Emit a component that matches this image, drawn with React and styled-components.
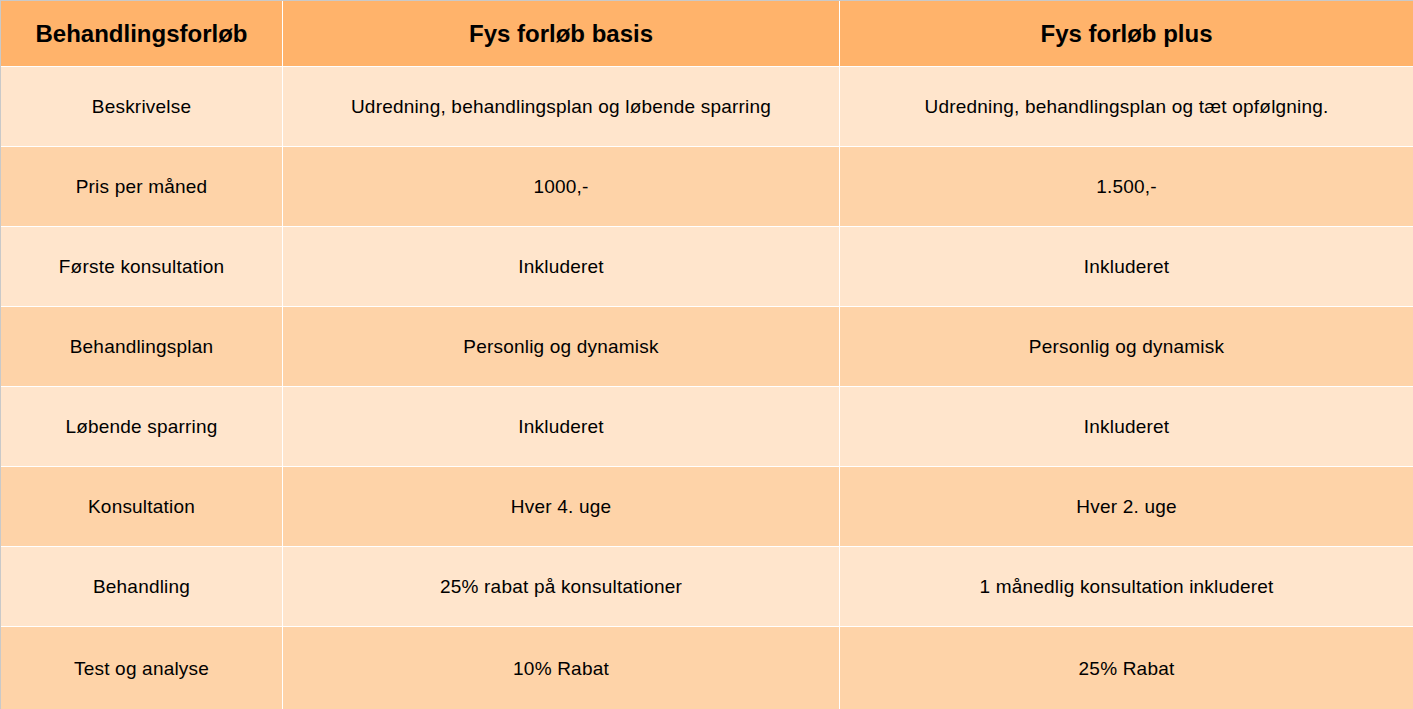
import React from 'react';
import styled, { createGlobalStyle } from 'styled-components';

const GlobalStyle = createGlobalStyle`
    body {
        margin: 0;
        padding: 0;
        background-color: #fff;
        font-family: "Liberation Sans", Arial, sans-serif;
        color: #000;
    }
`;

const Table = styled.div`
    display: grid;
    grid-template-columns: 281px 556px 1fr;
    grid-template-rows: 65px repeat(7, 79px) 1fr;
    gap: 1px;
    min-height: 100vh;
    box-sizing: border-box;
    background-color: #fff;
    border-top: 1px solid #c9c9c9;
    border-left: 1px solid #c9c9c9;
`;

const HeadCell = styled.div`
    display: flex;
    align-items: center;
    justify-content: center;
    background-color: #ffb36b;
    font-size: 24px;
    font-weight: bold;
    padding-top: 1px;
`;

const Cell = styled.div`
    display: flex;
    align-items: center;
    justify-content: center;
    background-color: ${(p) => (p.$dark ? '#fed3a8' : '#ffe5cc')};
    font-size: 19px;
    letter-spacing: 0.2px;
    padding-top: 1px;
`;

const rows = [
    ['Beskrivelse', 'Udredning, behandlingsplan og løbende sparring', 'Udredning, behandlingsplan og tæt opfølgning.'],
    ['Pris per måned', '1000,-', '1.500,-'],
    ['Første konsultation', 'Inkluderet', 'Inkluderet'],
    ['Behandlingsplan', 'Personlig og dynamisk', 'Personlig og dynamisk'],
    ['Løbende sparring', 'Inkluderet', 'Inkluderet'],
    ['Konsultation', 'Hver 4. uge', 'Hver 2. uge'],
    ['Behandling', '25% rabat på konsultationer', '1 månedlig konsultation inkluderet'],
    ['Test og analyse', '10% Rabat', '25% Rabat'],
];

const App = () => {
    return (
        <>
            <GlobalStyle />
            <Table>
                <HeadCell>Behandlingsforløb</HeadCell>
                <HeadCell>Fys forløb basis</HeadCell>
                <HeadCell>Fys forløb plus</HeadCell>
                {rows.map((row, i) =>
                    row.map((text, j) => (
                        <Cell key={`${i}-${j}`} $dark={i % 2 === 1}>
                            {text}
                        </Cell>
                    ))
                )}
            </Table>
        </>
    );
};

export default App;
